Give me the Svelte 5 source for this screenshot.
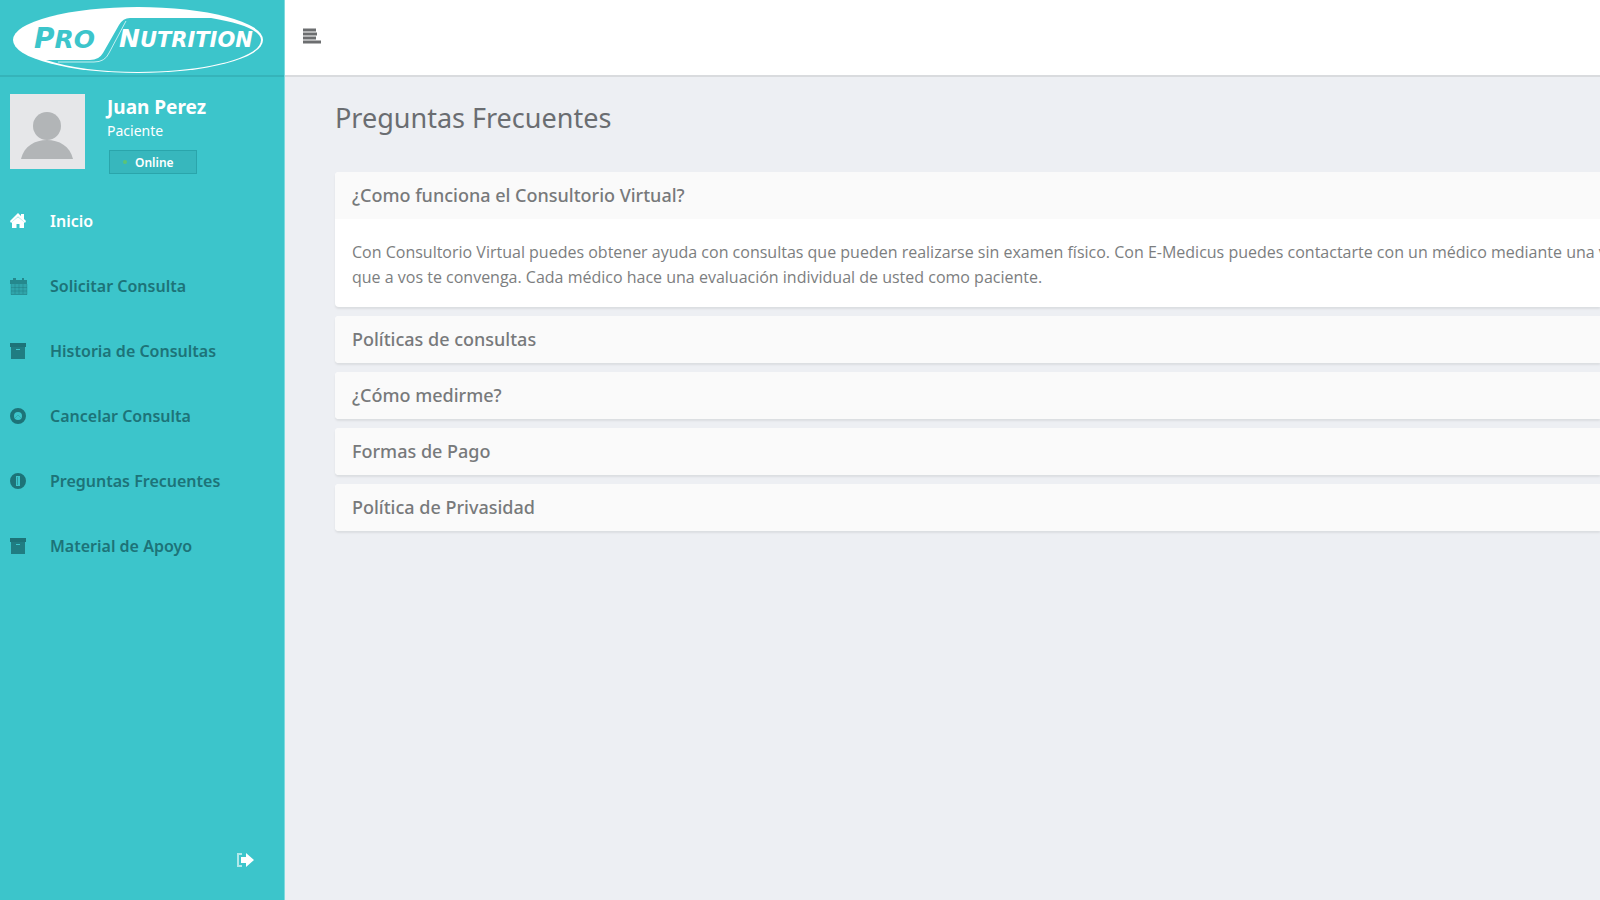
<script>
	// Sidebar links
	const links = [
		{ name: 'Inicio', icon: 'home', active: true },
		{ name: 'Solicitar Consulta', icon: 'calendar' },
		{ name: 'Historia de Consultas', icon: 'archive' },
		{ name: 'Cancelar Consulta', icon: 'cancel' },
		{ name: 'Preguntas Frecuentes', icon: 'info' },
		{ name: 'Material de Apoyo', icon: 'archive' }
	];

	// Questions, every answer is a list of lines
	const questions = [
		{
			title: '¿Como funciona el Consultorio Virtual?',
			lines: [
				'Con Consultorio Virtual puedes obtener ayuda con consultas que pueden realizarse sin examen físico. Con E-Medicus puedes contactarte con un médico mediante una v',
				'que a vos te convenga. Cada médico hace una evaluación individual de usted como paciente.'
			]
		},
		{ title: 'Políticas de consultas', lines: [] },
		{ title: '¿Cómo medirme?', lines: [] },
		{ title: 'Formas de Pago', lines: [] },
		{ title: 'Política de Privasidad', lines: [] }
	];

	let open = $state(0);
</script>

<div class="page">
	<aside class="sidebar">
		<a class="logo" href="#inicio" aria-label="Pro Nutrition">
			<svg width="256" height="68" viewBox="10 6 256 68">
				<ellipse cx="138" cy="40" rx="125" ry="33" fill="#fff" />
				<path d="M130 18 H211 C242 23 261 31 261 40 C261 58 205 72 138 72 C102 72 70 68 46 60 H90 Q99 60 103 53 L119 25 Q123 18 130 18 Z" fill="#3cc5cb" />
				<path d="M126 21 L109 53 Q105 62 94 62 H58" fill="none" stroke="#c5eff1" stroke-width="1" />
				<text class="brand" x="34" y="48" fill="#3cc5cb"><tspan class="big">P</tspan>RO</text>
				<text class="brand small" x="119" y="47" fill="#fff"><tspan class="medium">N</tspan>UTRITION</text>
			</svg>
		</a>

		<div class="user">
			<svg class="avatar" width="75" height="75" viewBox="0 0 75 75">
				<rect width="75" height="75" fill="#e6e7e9" />
				<circle cx="37" cy="32" r="14" fill="#b2b5b7" />
				<path d="M11 65 C14 52 25 46 37 46 C49 46 60 52 63 65 Z" fill="#b2b5b7" />
			</svg>
			<div class="info">
				<strong>Juan Perez</strong>
				<span>Paciente</span>
				<button class="status"><i></i>Online</button>
			</div>
		</div>

		<nav>
			{#each links as link}
				<a class:active={link.active} href="#{link.icon}">
					<svg width="18" height="18" viewBox="0 0 18 18" fill="currentColor">
						{#if link.icon === 'home'}
							<path d="M8 1 L11 4 V2 H14 V7 L16 9 L15 11 L8 4.500 L1 11 L0 9 Z" />
							<path d="M8 5 L14 10 V16 H9.500 V12 H6.500 V16 H2 V10 Z" />
						{:else if link.icon === 'calendar'}
							<path d="M0 3 H3 V1 H6 V3 H12 V1 H14 V3 H17 V7 H0 Z" opacity=".75" />
							<path d="M1 7 H17 V18 H1 Z" opacity=".4" />
							<path d="M1 7 V17.500 H17 V7 M1 10.500 H17 M1 14 H17 M5 7 V17 M9 7 V17 M13 7 V17" fill="none" stroke="currentColor" opacity=".35" />
						{:else if link.icon === 'archive'}
							<path d="M0 1 H16 V5 H0 Z" />
							<path fill-rule="evenodd" d="M1 5 H15 V17 H1 Z M6 7 V8 H10 V7 Z" opacity=".88" />
						{:else if link.icon === 'cancel'}
							<circle cx="8" cy="9" r="6" fill="none" stroke="currentColor" stroke-width="4" />
							<path d="M5 11 L8 8 L11 11" fill="none" stroke="currentColor" opacity=".3" />
						{:else}
							<path fill-rule="evenodd" d="M8 1 A8 8 0 1 0 8 17 A8 8 0 1 0 8 1 Z M6 4 H10 V14 H6 Z" />
							<path d="M7 5 H8 V13 H7 Z" opacity=".5" />
						{/if}
					</svg>
					{link.name}
				</a>
			{/each}
		</nav>

		<button class="logout" aria-label="Salir">
			<svg width="18" height="16" viewBox="0 0 18 16">
				<path d="M5 2 H1 V14 H5" fill="none" stroke="#fff" stroke-width="2" opacity=".6" />
				<path d="M4 5 H9 V1 L17 8 L9 15 V11 H4 Z" fill="#fff" />
			</svg>
		</button>
	</aside>

	<div class="content">
		<header>
			<button class="toggle" aria-label="Menú">
				<svg width="20" height="18" viewBox="0 0 20 18" stroke="#6c6e70" stroke-width="3">
					<path d="M1 3 H14 M1 7 H15 M1 11 H14 M1 15 H19" />
				</svg>
			</button>
		</header>

		<main>
			<h1>Preguntas Frecuentes</h1>
			{#each questions as question, i}
				<section>
					<h2><button aria-expanded={open === i} onclick={() => (open = i)}>{question.title}</button></h2>
					{#if open === i && question.lines.length}
						<p>
							{#each question.lines as line}
								<span>{line}</span>
							{/each}
						</p>
					{/if}
				</section>
			{/each}
		</main>
	</div>
</div>

<style>
	:global(body) {
		background: #edeff3;
		font-family: "Noto Sans", "Open Sans", sans-serif;
	}

	button {
		margin: 0;
		padding: 0;
		border: 0;
		background: none;
		font: inherit;
		color: inherit;
		cursor: pointer;
	}

	svg {
		display: block;
		flex: none;
	}

	.page {
		display: flex;
		min-height: 100vh;
	}

	/* Sidebar */
	.sidebar {
		display: flex;
		flex-direction: column;
		flex: none;
		box-sizing: border-box;
		width: 285px;
		background: #3cc5cb;
		border-right: 1px solid #7fdade;
	}

	.logo {
		box-sizing: border-box;
		height: 77px;
		padding: 6px 10px 0;
		border-bottom: 2px solid #35b4ba;
	}

	.brand {
		font-family: "DejaVu Sans", sans-serif;
		font-size: 25px;
		font-weight: bold;
		font-style: italic;
	}

	.brand.small {
		font-size: 21px;
	}

	.big {
		font-size: 28px;
	}

	.medium {
		font-size: 25px;
	}

	.user {
		display: flex;
		gap: 22px;
		padding: 17px 10px 0;
	}

	.info {
		display: flex;
		flex-direction: column;
		align-items: flex-start;
		color: #fff;
	}

	.info strong {
		font-size: 19px;
		line-height: 26px;
	}

	.info span {
		font-size: 14px;
		line-height: 22px;
	}

	.status {
		display: flex;
		align-items: center;
		gap: 8px;
		box-sizing: border-box;
		width: 88px;
		height: 24px;
		margin: 8px 0 0 2px;
		padding: 0 13px;
		border: 1px solid #2aa5ab;
		background: #37b7bd;
		font-size: 12px;
		font-weight: 600;
	}

	.status i {
		width: 4px;
		height: 4px;
		border-radius: 50%;
		background: #5cc474;
	}

	nav {
		display: flex;
		flex-direction: column;
		padding-top: 14px;
	}

	nav a {
		display: flex;
		align-items: center;
		gap: 22px;
		height: 65px;
		padding-left: 10px;
		color: #1d7378;
		font-size: 16px;
		font-weight: 600;
		text-decoration: none;
	}

	nav a.active {
		color: #fff;
	}

	.logout {
		align-self: flex-end;
		margin: auto 29px 32px 0;
	}

	/* Content */
	.content {
		flex: 1;
		min-width: 0;
	}

	header {
		display: flex;
		align-items: center;
		box-sizing: border-box;
		height: 77px;
		padding: 0 17px 4px;
		background: #fff;
		border-bottom: 2px solid #d9dbde;
	}

	main {
		padding: 20px 0 20px 50px;
	}

	h1 {
		margin: 0 0 33px;
		color: #6a6d71;
		font-size: 27px;
		font-weight: 400;
		line-height: 42px;
	}

	section {
		margin-bottom: 9px;
		overflow: hidden;
		border-radius: 4px 0 0 4px;
		background: #fff;
		box-shadow: 0 2px 2px #dcdee1;
	}

	h2 {
		margin: 0;
		background: #fafafa;
		color: #77797b;
		font-size: 18px;
		font-weight: 500;
		line-height: 47px;
	}

	h2 button {
		display: block;
		width: 100%;
		padding: 0 17px;
		text-align: left;
	}

	p {
		margin: 0;
		padding: 21px 17px 17px;
		color: #7c7e80;
		font-family: "Open Sans", "Noto Sans", sans-serif;
		font-size: 16px;
		line-height: 25px;
	}

	p span {
		display: block;
		white-space: nowrap;
	}
</style>
